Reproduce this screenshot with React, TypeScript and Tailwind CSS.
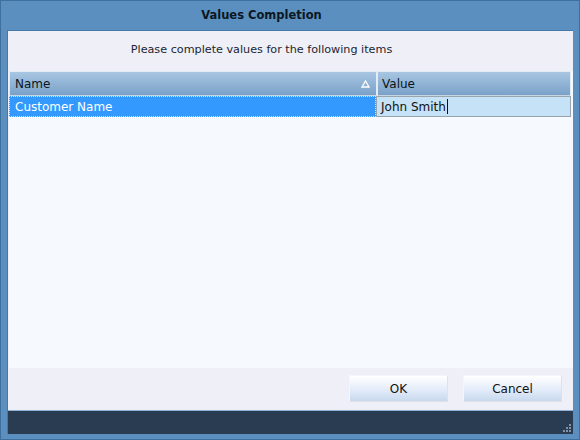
import React from 'react'

const font = { fontFamily: '"DejaVu Sans", Verdana, sans-serif' }

function Grip() {
    const dots: [number, number][] = [
        [8, 0], [5, 3], [8, 3], [2, 6], [5, 6], [8, 6],
    ]
    return (
        <svg width="11" height="9" viewBox="0 0 11 9" className="absolute right-[1px] bottom-[1px]">
            {dots.map(([x, y], i) => (
                <rect key={i} x={x} y={y} width="2" height="2" fill="#7f93ab" />
            ))}
        </svg>
    )
}

export default function App() {
    return (
        <div className="w-[580px] h-[440px] bg-[#5a8fbf] border border-[#3f6f9c] flex flex-col" style={font}>
            <div className="h-[29px] flex items-center justify-center pr-[57px] text-[11.5px] font-bold text-[#0c1724]">
                Values Completion
            </div>
            <div className="flex-1 mx-[6px] mb-[5px] flex flex-col border-l border-t border-[#477aa9]">
                <div className="h-[40px] bg-[#eeeff7] flex items-center justify-center pr-[58px] text-[11.2px] text-[#1c2530] pb-[2px]">
                    Please complete values for the following items
                </div>
                <div className="flex-1 bg-[#eeeff7] pl-[1px] flex flex-col">
                    <div className="flex-1 bg-[#f6f9fe] flex flex-col">
                        <div className="flex h-[25px] text-[12px] text-[#0b1520]">
                            <div className="w-[368px] flex items-center pl-[5px] pr-[6px] border border-[#e3ecf5] border-b-[#c9d6e2] bg-gradient-to-b from-[#a8c6e2] to-[#7aa1c8]">
                                <span className="flex-1">Name</span>
                                <svg width="9" height="8" viewBox="0 0 9 8">
                                    <path d="M4.5 1 L8 7 L1 7 Z" fill="none" stroke="#ffffff" strokeWidth="1.3" />
                                </svg>
                            </div>
                            <div className="w-[194px] flex items-center pl-[4px] border border-[#e3ecf5] border-b-[#c9d6e2] bg-gradient-to-b from-[#a8c6e2] to-[#7aa1c8]">
                                Value
                            </div>
                        </div>
                        <div className="flex h-[21px] text-[12px]">
                            <div className="w-[367px] bg-[#3399ff] text-white flex items-center pl-[5px] border border-dotted border-[#cfe5ff]">
                                Customer Name
                            </div>
                            <div className="w-[195px] bg-[#c6e2f6] text-[#111] flex items-center pl-[4px] border border-[#9aa4ad]">
                                John Smith<span className="inline-block w-[1px] h-[15px] bg-[#111] ml-[1px]" />
                            </div>
                        </div>
                        <div className="flex-1" />
                    </div>
                    <div className="h-[42px] flex items-center justify-end gap-[15px] pr-[11px] pb-[1px]">
                        {['OK', 'Cancel'].map(label => (
                            <button
                                key={label}
                                className="w-[99px] h-[27px] text-[12px] text-[#111] border border-[#f4f6fa] border-r-[#dde2ea] border-b-[#dde2ea] bg-gradient-to-b from-[#ffffff] via-[#e6eefa] to-[#c8d9ee]"
                            >
                                {label}
                            </button>
                        ))}
                    </div>
                </div>
                <div className="h-[24px] bg-[#2a3c52] border-t border-[#8fb2d8] relative">
                    <Grip />
                </div>
            </div>
        </div>
    )
}
